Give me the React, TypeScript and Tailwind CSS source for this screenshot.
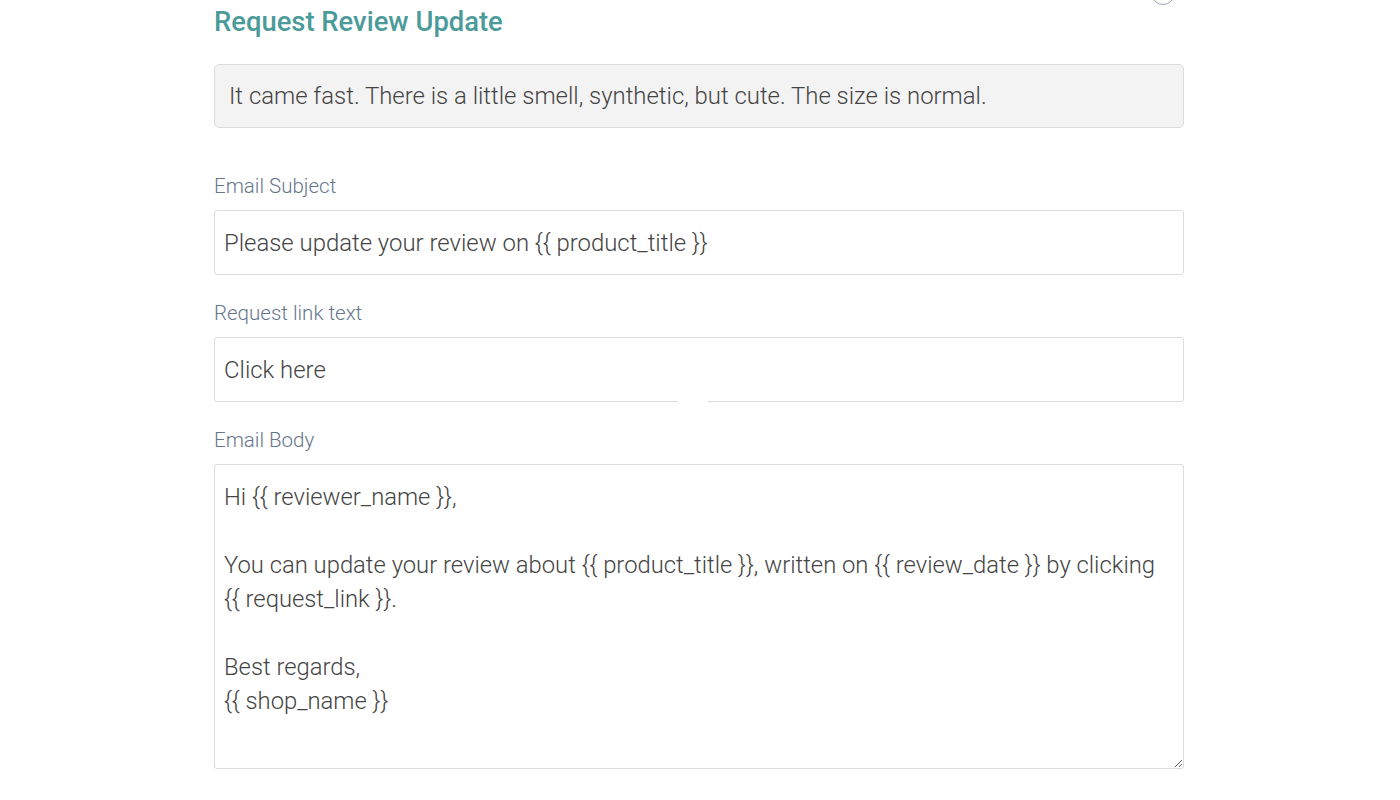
import { useState } from 'react';

const BODY = `Hi {{ reviewer_name }},

You can update your review about {{ product_title }}, written on {{ review_date }} by clicking {{ request_link }}.

Best regards,
{{ shop_name }}`;

export default function App() {
  const [subject, setSubject] = useState('Please update your review on {{ product_title }}');
  const [linkText, setLinkText] = useState('Click here');
  const [body, setBody] = useState(BODY);

  return (
    <div className="min-h-screen bg-white font-['Roboto',sans-serif] text-[#4a4a4a]">
      <div className="relative ml-[214px] w-[970px] pt-[4px]">
        <div className="absolute right-[9px] top-[-19px] h-[24px] w-[24px] rounded-full border border-[#9aa3ad]" />
        <h2 className="text-[27.4px] font-medium leading-[36px] text-[#4b9b9a]">Request Review Update</h2>
        <div className="mt-[24px] rounded-[5px] border border-[#dcdcdc] bg-[#f3f3f3] px-[14px] py-[14px] text-[23.9px] font-light leading-[34px] text-[#444]">
          It came fast. There is a little smell, synthetic, but cute. The size is normal.
        </div>

        <div className="mt-[44px] flex flex-col">
          <label className="text-[20.5px] font-light leading-[28px] text-[#66768a]">Email Subject</label>
          <input
            value={subject}
            onChange={e => setSubject(e.target.value)}
            className="mt-[10px] h-[65px] w-full rounded-[3px] border border-[#dcdcdc] px-[9px] text-[23.9px] font-light text-[#444] outline-none"
          />
        </div>

        <div className="mt-[24px] flex flex-col">
          <label className="text-[20.5px] font-light leading-[28px] text-[#66768a]">Request link text</label>
          <div className="relative mt-[10px]">
            <input
              value={linkText}
              onChange={e => setLinkText(e.target.value)}
              className="h-[65px] w-full rounded-[3px] border border-[#dcdcdc] px-[9px] text-[23.9px] font-light text-[#444] outline-none"
            />
            <div className="absolute bottom-0 left-[464px] h-[2px] w-[30px] bg-white" />
          </div>
        </div>

        <div className="mt-[24px] flex flex-col">
          <label className="text-[20.5px] font-light leading-[28px] text-[#66768a]">Email Body</label>
          <textarea
            value={body}
            onChange={e => setBody(e.target.value)}
            className="mt-[10px] h-[305px] w-full rounded-[3px] border border-[#dcdcdc] px-[9px] py-[15px] text-[23.8px] font-light leading-[34px] text-[#444] outline-none"
          />
        </div>
      </div>
    </div>
  );
}
